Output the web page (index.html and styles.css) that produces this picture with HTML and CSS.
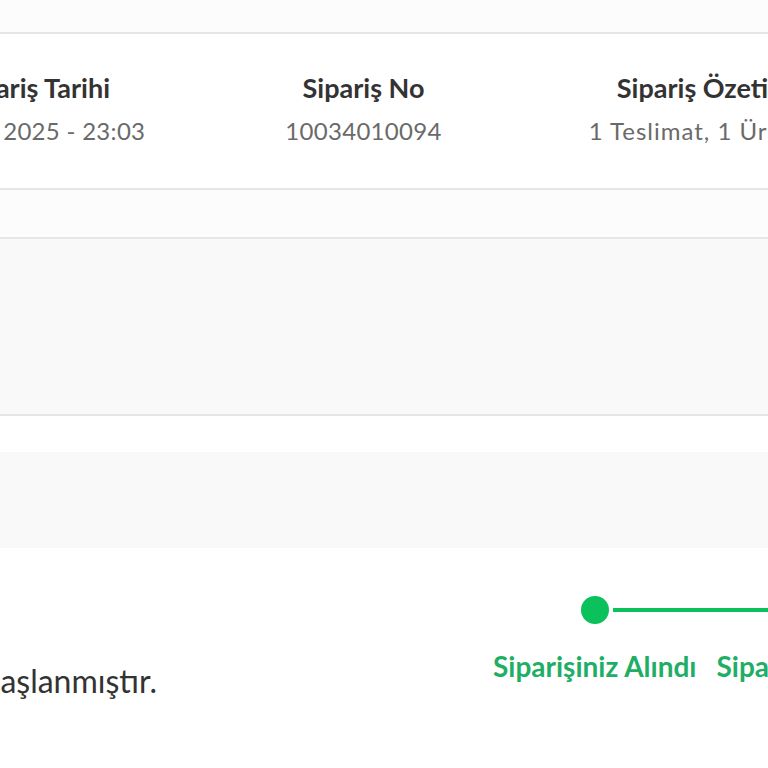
FILE: index.html
```html
<!DOCTYPE html>
<html lang="tr">
<head>
<meta charset="UTF-8">
<meta name="viewport" content="width=device-width, initial-scale=1.0">
<title>Sipariş Detayı</title>
<link rel="stylesheet" href="styles.css">
</head>
<body>
<div class="page">
  <div class="top-strip"></div>

  <div class="order-card">
    <div class="info-col">
      <h3>Sipariş Tarihi</h3>
      <p>3 Mart 2025 - 23:03</p>
    </div>
    <div class="info-col">
      <h3>Sipariş No</h3>
      <p>10034010094</p>
    </div>
    <div class="info-col">
      <h3>Sipariş Özeti</h3>
      <p class="wide">1 Teslimat, 1 Ürün</p>
    </div>
    <div class="info-col">
      <h3>Sipariş Tutarı</h3>
      <p>249,90 TL</p>
    </div>
  </div>

  <div class="spacer-strip"></div>
  <div class="address-box"></div>
  <div class="gap-white"></div>
  <div class="delivery-bar"></div>

  <div class="delivery-row">
    <div class="delivery-msg">
      <span>Siparişinizin hazırlanmasına başlanmıştır.</span>
    </div>

    <div class="tracker">
      <div class="step done">
        <div class="track">
          <span class="line hidden"></span>
          <span class="dot"></span>
          <span class="line"></span>
        </div>
        <span class="label">Siparişiniz Alındı</span>
      </div>
      <div class="step done">
        <div class="track">
          <span class="line"></span>
          <span class="dot"></span>
          <span class="line"></span>
        </div>
        <span class="label">Siparişiniz Hazırlanıyor</span>
      </div>
      <div class="step">
        <div class="track">
          <span class="line"></span>
          <span class="dot"></span>
          <span class="line"></span>
        </div>
        <span class="label">Kargoya Verildi</span>
      </div>
    </div>
  </div>
</div>
</body>
</html>
```

FILE: styles.css
```css
html, body {
  margin: 0;
  padding: 0;
  overflow: hidden;
  background: #fff;
  font-family: Lato, "Noto Sans", sans-serif;
  color: #333;
}

.page {
  margin-left: -130px;
  width: 1400px;
}

.top-strip {
  height: 32px;
  background: #fcfcfc;
  border-bottom: 2px solid #e6e6e6;
}

/* siparis bilgileri */
.order-card {
  display: grid;
  grid-template-columns: repeat(4, 329px);
  padding: 34px 0 37px;
  background: #fff;
  border-bottom: 2px solid #e6e6e6;
}

.info-col {
  text-align: center;
  white-space: nowrap;
}

.info-col h3 {
  margin: 0;
  font-size: 27px;
  line-height: 40px;
  font-weight: 700;
  color: #333;
}

.info-col p {
  margin: 3px 0 0;
  font-size: 24px;
  line-height: 40px;
  letter-spacing: 0.3px;
  color: #6a6a6a;
}

.info-col p.wide {
  letter-spacing: 1px;
}

.spacer-strip {
  height: 47px;
  background: #fcfcfc;
  border-bottom: 2px solid #e6e6e6;
}

.address-box {
  height: 175px;
  background: #f9f9f9;
  border-bottom: 2px solid #e6e6e6;
}

.gap-white {
  height: 36px;
  background: #fff;
}

.delivery-bar {
  height: 96px;
  background: #f9f9f9;
}

/* teslimat satiri */
.delivery-row {
  display: flex;
  align-items: flex-start;
  height: 220px;
}

.delivery-msg {
  display: flex;
  justify-content: flex-end;
  width: 287px;
  margin-top: 113px;
  white-space: nowrap;
  font-size: 32px;
  line-height: 40px;
  color: #333;
}

.tracker {
  display: flex;
  margin-left: 326px;
  padding-top: 48px;
}

.step {
  display: flex;
  flex-direction: column;
  align-items: stretch;
}

.track {
  display: flex;
  align-items: center;
  height: 28px;
}

.line {
  flex: 1;
  height: 4px;
  background: #0bc15c;
}

.line.hidden {
  visibility: hidden;
}

.track .line:first-child {
  margin-right: 4px;
}

.track .line:last-child {
  margin-left: 4px;
}

.dot {
  width: 28px;
  height: 28px;
  border-radius: 50%;
  background: #0bc15c;
}

.label {
  margin-top: 27px;
  padding: 0 10px;
  font-size: 28px;
  line-height: 30px;
  font-weight: 700;
  color: #1fae66;
  white-space: nowrap;
  text-align: center;
}

.step:not(.done) .dot,
.step:not(.done) .line {
  background: #d9d9d9;
}
```
